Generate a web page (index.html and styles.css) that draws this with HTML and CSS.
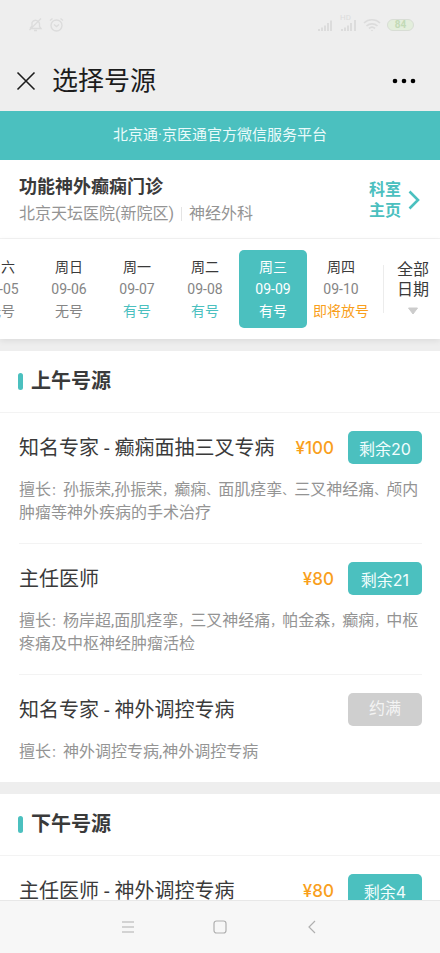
FILE: index.html
```html
<!DOCTYPE html>
<html lang="zh-CN">
<head>
<meta charset="utf-8">
<meta name="viewport" content="width=device-width, initial-scale=1">
<title>选择号源</title>
<link rel="stylesheet" href="styles.css">
</head>
<body>
<div class="app">
  <div class="status">
    <div class="status-group">
      <svg width="15" height="16" viewBox="0 0 15 16" fill="none" stroke="currentColor" stroke-width="1.3"><path d="M3 11.500h10l-1.500-2V6.500A4 4 0 0 0 4 5.500V9l-2 2.500M6 13.500h3M13 1.500L1.500 13"/></svg>
      <svg width="15" height="16" viewBox="0 0 15 16" fill="none" stroke="currentColor" stroke-width="1.4"><circle cx="7.500" cy="8.500" r="5.500"/><path d="M5 7.500l2.500 2 2.500-2M1 3.500l2.500-2M14 3.500l-2.500-2"/></svg>
    </div>
    <div class="status-group signals">
      <svg width="17" height="14" viewBox="0 0 17 14" fill="currentColor"><path d="M1 11h2v2H1zM4 9.500h2V13H4zM7 7.500h2V13H7zM10 5h2v8h-2zM13 2.500h2V13h-2z"/></svg>
      <span class="network"><span class="hd">HD</span><svg width="17" height="14" viewBox="0 0 17 14" fill="currentColor"><path d="M1 11h2v2H1zM4 9.500h2V13H4zM7 7.500h2V13H7zM10 5h2v8h-2zM14 2h2v11h-2z"/></svg></span>
      <svg width="18" height="14" viewBox="0 0 18 14" fill="none" stroke="currentColor" stroke-width="1.7"><path d="M1 5a11.500 11.500 0 0 1 16 0M3.500 8a8 8 0 0 1 11 0M6 10.500a4.500 4.500 0 0 1 6 0"/><circle cx="9" cy="12.500" r=".8" fill="currentColor" stroke="none"/></svg>
      <span class="battery">84</span>
    </div>
  </div>
  <header class="titlebar">
    <button class="icon-button" aria-label="关闭"><svg width="20" height="20" viewBox="0 0 20 20" fill="none" stroke="currentColor" stroke-width="1.6"><path d="M1.500 1.500l17 17M18.500 1.500l-17 17"/></svg></button>
    <h1>选择号源</h1>
    <button class="icon-button" aria-label="更多"><svg width="24" height="6" viewBox="0 0 24 6" fill="#000"><circle cx="3" cy="3" r="2.300"/><circle cx="12" cy="3" r="2.300"/><circle cx="21" cy="3" r="2.300"/></svg></button>
  </header>
  <main>
    <p class="banner">北京通·京医通官方微信服务平台</p>
    <section class="clinic">
      <div>
        <h2>功能神外癫痫门诊</h2>
        <p class="place"><span>北京天坛医院(新院区)</span><span class="dept">神经外科</span></p>
      </div>
      <a class="home" href="#"><span>科室<br>主页</span><svg width="12" height="20" viewBox="0 0 12 20" fill="none" stroke="currentColor" stroke-width="2.600"><path d="M1.500 1.500L10 10l-8.500 8.500"/></svg></a>
    </section>
    <nav class="dates">
      <div class="days">
        <button class="day"><b>周六</b><span>09-05</span><span>无号</span></button>
        <button class="day"><b>周日</b><span>09-06</span><span>无号</span></button>
        <button class="day"><b>周一</b><span>09-07</span><span class="open">有号</span></button>
        <button class="day"><b>周二</b><span>09-08</span><span class="open">有号</span></button>
        <button class="day selected"><b>周三</b><span>09-09</span><span>有号</span></button>
        <button class="day"><b>周四</b><span>09-10</span><span class="soon">即将放号</span></button>
      </div>
      <button class="all"><span>全部<br>日期</span><svg width="12" height="8" viewBox="0 0 12 8" fill="currentColor"><path d="M1.500 1h9L6 7z" stroke="currentColor" stroke-linejoin="round"/></svg></button>
    </nav>

    <section class="session">
      <h2 class="session-title">上午号源</h2>
      <ul>
        <li>
          <div class="row"><h3>知名专家 - 癫痫面抽三叉专病</h3><span class="price">¥100</span><button class="book">剩余20</button></div>
          <p class="skills">擅长<i>：</i>孙振荣,孙振荣<i>，</i>癫痫<i>、</i>面肌痉挛<i>、</i>三叉神经痛<i>、</i>颅内肿瘤等神外疾病的手术治疗</p>
        </li>
        <li>
          <div class="row"><h3>主任医师</h3><span class="price">¥80</span><button class="book">剩余21</button></div>
          <p class="skills">擅长<i>：</i>杨岸超,面肌痉挛<i>，</i>三叉神经痛<i>，</i>帕金森<i>，</i>癫痫<i>，</i>中枢疼痛及中枢神经肿瘤活检</p>
        </li>
        <li>
          <div class="row"><h3>知名专家 - 神外调控专病</h3><button class="book full" disabled>约满</button></div>
          <p class="skills">擅长<i>：</i>神外调控专病,神外调控专病</p>
        </li>
      </ul>
    </section>

    <section class="session">
      <h2 class="session-title">下午号源</h2>
      <ul>
        <li>
          <div class="row"><h3>主任医师 - 神外调控专病</h3><span class="price">¥80</span><button class="book">剩余4</button></div>
        </li>
      </ul>
    </section>
  </main>
  <footer class="system">
    <button class="icon-button" aria-label="任务"><svg width="14" height="14" viewBox="0 0 14 14" fill="none" stroke="currentColor" stroke-width="1.200"><path d="M1 2h12M1 7h12M1 12h12"/></svg></button>
    <button class="icon-button" aria-label="主屏幕"><svg width="14" height="14" viewBox="0 0 14 14" fill="none" stroke="currentColor" stroke-width="1.200"><rect x="1" y="1" width="12" height="12" rx="2.500"/></svg></button>
    <button class="icon-button" aria-label="返回"><svg width="14" height="14" viewBox="0 0 14 14" fill="none" stroke="currentColor" stroke-width="1.200"><path d="M10 1L4 7l6 6"/></svg></button>
  </footer>
</div>
</body>
</html>
```
FILE: styles.css
```css
:root {
  --teal: #4bc0bf;
  --orange: #f99f1c;
  --ink: #3a3a3a;
  --muted: #949494;
  --line: #f3f3f3;
}

* { box-sizing: border-box; margin: 0; padding: 0; }

body {
  font-family: Roboto, "Noto Sans CJK SC", sans-serif;
  color: var(--ink);
  background: #eee;
}

button {
  font: inherit;
  color: inherit;
  background: none;
  border: 0;
}

ul { list-style: none; }
svg { display: block; flex: none; }

.app {
  display: flex;
  flex-direction: column;
  height: 100vh;
}

.status {
  display: flex;
  justify-content: space-between;
  align-items: center;
  height: 50px;
  padding: 0 26px 0 28px;
  color: #dcdcdc;
}

.status-group { display: flex; align-items: center; gap: 6px; }

.network { position: relative; }

.hd {
  position: absolute;
  top: -4px;
  left: 0;
  font-size: 8px;
  line-height: 8px;
}

.battery {
  width: 27px;
  border: 1px solid #d8ddd5;
  border-radius: 6px;
  background: #e3eedc;
  color: #c2dab6;
  font-size: 10px;
  line-height: 10px;
  font-weight: 700;
  text-align: center;
}

.titlebar {
  display: flex;
  align-items: center;
  height: 61px;
  padding: 0 24px 0 16px;
  color: #1c1c1c;
}

.titlebar h1 {
  flex: 1;
  padding-left: 16px;
  font-size: 26px;
  line-height: 36px;
  font-weight: 400;
}

main { flex: 1; min-height: 0; overflow: hidden; }

.banner {
  background: var(--teal);
  color: #e9fafa;
  font-size: 15px;
  line-height: 49px;
  text-align: center;
}

.clinic {
  display: flex;
  justify-content: space-between;
  align-items: center;
  padding: 13px 20px 11px 19px;
  background: #fff;
  border-bottom: 1px solid var(--line);
}

.clinic h2 { font-size: 18px; line-height: 28px; }

.place {
  display: flex;
  align-items: center;
  gap: 7px;
  color: var(--muted);
  font-size: 16px;
  line-height: 26px;
}

.dept {
  padding-left: 8px;
  background: linear-gradient(#e4e4e4, #e4e4e4) left center / 1px 14px no-repeat;
}

.home {
  display: flex;
  align-items: center;
  gap: 7px;
  color: var(--teal);
  font-size: 16px;
  line-height: 21px;
  font-weight: 700;
  text-decoration: none;
}

.dates {
  position: relative;
  display: flex;
  align-items: center;
  padding: 11px 0;
  background: #fff;
  box-shadow: 0 2px 6px #00000014;
}

.days {
  display: flex;
  flex: 1;
  justify-content: flex-end;
  min-width: 0;
  margin-right: 8px;
  overflow: hidden;
}

.day {
  display: flex;
  flex: none;
  flex-direction: column;
  align-items: center;
  width: 68px;
  padding: 6px 0;
  border-radius: 5px;
  color: #858585;
  font-size: 14px;
  line-height: 22px;
  white-space: nowrap;
}

.day b { color: var(--ink); font-weight: 400; }
.day .open { color: var(--teal); }
.day .soon { color: var(--orange); }
.day.selected { background: var(--teal); }
.day.selected, .day.selected b { color: #fff; }

.all {
  display: flex;
  flex-direction: column;
  align-items: center;
  gap: 7px;
  padding: 0 11px 4px 14px;
  background: linear-gradient(#ececec, #ececec) left center / 1px 48px no-repeat;
  font-size: 16px;
  line-height: 20px;
}

.all svg { color: #ccc; }

.session { margin-top: 12px; background: #fff; }

.session-title {
  display: flex;
  align-items: center;
  gap: 8px;
  padding: 16px 18px;
  border-bottom: 1px solid var(--line);
  font-size: 20px;
  line-height: 29px;
}

.session-title::before {
  content: "";
  width: 5px;
  height: 17px;
  border-radius: 3px;
  background: var(--teal);
}

.session li {
  margin: 0 18px 0 19px;
  padding: 18px 0 19px;
  border-bottom: 1px solid var(--line);
}

.session li:last-child { border-bottom: 0; }

.row { display: flex; align-items: center; height: 33px; }

.row h3 {
  flex: 1;
  padding-top: 2px;
  font-size: 20px;
  line-height: 33px;
  font-weight: 400;
  white-space: nowrap;
}

.price {
  margin-right: 14px;
  padding-top: 2px;
  color: var(--orange);
  font-family: Inter, sans-serif;
  font-size: 17px;
  line-height: 33px;
  font-weight: 500;
}

.book {
  width: 74px;
  height: 33px;
  padding-top: 3px;
  border-radius: 5px;
  background: var(--teal);
  color: #f2fdfd;
  font-family: Inter, "Noto Sans CJK SC", sans-serif;
  font-size: 16px;
  line-height: 30px;
}

.book.full { padding: 0 0 3px; background: #cfcfcf; color: #f4f4f4; }

.skills {
  margin-top: 14px;
  color: var(--muted);
  font-size: 16px;
  line-height: 23px;
}

/* Tighter full-width punctuation inside the running description. */
.skills i { font-size: 12px; font-style: normal; line-height: 1; }

.system {
  display: flex;
  justify-content: center;
  align-items: center;
  gap: 78px;
  height: 53px;
  border-top: 1px solid #e8e8e8;
  background: #f7f7f7;
  color: #b0b0b0;
}
```
